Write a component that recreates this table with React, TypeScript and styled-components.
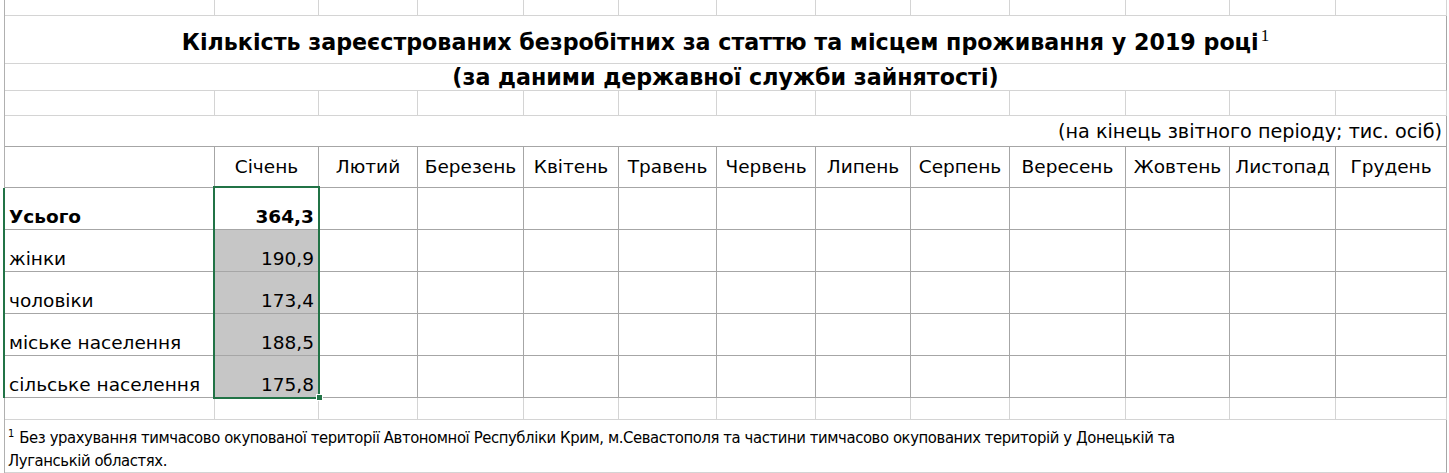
import React from "react";
import styled, { createGlobalStyle, css } from "styled-components";

const GlobalStyle = createGlobalStyle`
  html, body { margin: 0; padding: 0; background: #ffffff; }
  body { font-family: "DejaVu Sans", Verdana, sans-serif; color: #000; }
`;

const LIGHT = "#d4d4d4";
const DARK = "#a6a6a6";
const GREEN = "#217346";

const COLS = [210, 104, 99, 106, 95, 98, 99, 95, 99, 116, 104, 106, 111];

const MONTHS = [
  "Січень", "Лютий", "Березень", "Квітень", "Травень", "Червень",
  "Липень", "Серпень", "Вересень", "Жовтень", "Листопад", "Грудень",
];

const DATA: { label: string; value: string; bold?: boolean }[] = [
  { label: "Усього", value: "364,3", bold: true },
  { label: "жінки", value: "190,9" },
  { label: "чоловіки", value: "173,4" },
  { label: "міське населення", value: "188,5" },
  { label: "сільське населення", value: "175,8" },
];

const Sheet = styled.div`
  display: flex;
  flex-direction: column;
  width: 1449px;
  height: 473px;
  overflow: hidden;
`;

const Row = styled.div<{ $h: number }>`
  display: grid;
  grid-template-columns: 5px ${COLS.map((c) => `${c}px`).join(" ")} 3px;
  height: ${(p) => p.$h}px;
  flex: none;
`;

const Gutter = styled.div<{ $sel?: boolean }>`
  box-sizing: border-box;
  border-right: ${(p) => (p.$sel ? `2px solid ${GREEN}` : `1px solid #b0b0b0`)};
`;

const Cell = styled.div<{
  $dark?: boolean;
  $align?: "left" | "center" | "right";
  $center?: boolean;
  $bold?: boolean;
  $fill?: boolean;
  $active?: boolean;
}>`
  box-sizing: border-box;
  position: relative;
  border-right: 1px solid ${(p) => (p.$dark ? DARK : LIGHT)};
  border-bottom: 1px solid ${(p) => (p.$dark ? DARK : LIGHT)};
  display: flex;
  align-items: ${(p) => (p.$center ? "center" : "flex-end")};
  justify-content: ${(p) =>
    p.$align === "right" ? "flex-end" : p.$align === "center" ? "center" : "flex-start"};
  padding: 0 4px 1px 4px;
  font-size: 18.5px;
  line-height: 22px;
  font-weight: ${(p) => (p.$bold ? 700 : 400)};
  white-space: nowrap;
  ${(p) =>
    p.$fill &&
    css`
      background: #c6c6c6;
    `}
  ${(p) =>
    p.$active &&
    css`
      z-index: 1;
    `}
`;

const Merged = styled.div<{ $dark?: boolean }>`
  grid-column: 2 / span 13;
  box-sizing: border-box;
  border-right: 1px solid ${DARK};
  border-bottom: 1px solid ${(p) => (p.$dark ? DARK : LIGHT)};
  display: flex;
`;

const TitleLine = styled.div<{ $pb: number }>`
  width: 100%;
  align-self: flex-end;
  text-align: center;
  font-weight: 700;
  font-size: 22.2px;
  line-height: 24px;
  padding-bottom: ${(p) => p.$pb}px;
  white-space: nowrap;
`;

const TitleSup = styled.span`
  position: relative;
  top: -9px;
  font-family: "Liberation Serif", "Times New Roman", serif;
  font-weight: 400;
  font-size: 17px;
  line-height: 0;
  margin-left: 2px;
`;

const Units = styled.div`
  width: 100%;
  align-self: flex-end;
  text-align: right;
  font-size: 19.2px;
  line-height: 22px;
  padding: 0 4px 3px 0;
  white-space: nowrap;
`;

const Footnote = styled.div`
  align-self: flex-start;
  max-width: 1220px;
  padding: 6px 6px 0 3px;
  font-family: "DejaVu Sans Condensed", "Liberation Sans", Arial, sans-serif;
  font-stretch: condensed;
  font-size: 16.5px;
  letter-spacing: -0.4px;
  line-height: 23px;
`;

const FootSup = styled.span`
  position: relative;
  top: -6px;
  font-size: 11px;
  line-height: 0;
  margin-right: 5px;
  letter-spacing: 0;
`;

const SelectionFrame = styled.div`
  position: absolute;
  top: -2px;
  left: -2px;
  width: 107px;
  height: 213px;
  box-sizing: border-box;
  border: 2px solid ${GREEN};
  pointer-events: none;
`;

const FillHandle = styled.div`
  position: absolute;
  right: -4px;
  bottom: -3px;
  width: 5px;
  height: 5px;
  background: ${GREEN};
  box-shadow: 0 0 0 1px #ffffff;
`;

function EmptyRow({ h }: { h: number }) {
  return (
    <Row $h={h}>
      <Gutter />
      {COLS.map((_, i) => (
        <Cell key={i} />
      ))}
    </Row>
  );
}

export default function App() {
  return (
    <>
      <GlobalStyle />
      <Sheet>
        <EmptyRow h={16} />

        <Row $h={48}>
          <Gutter />
          <Merged>
            <TitleLine $pb={9}>
              Кількість зареєстрованих безробітних за статтю та місцем проживання у 2019 році
              <TitleSup>1</TitleSup>
            </TitleLine>
          </Merged>
        </Row>

        <Row $h={27}>
          <Gutter />
          <Merged>
            <TitleLine $pb={1}>(за даними державної служби зайнятості)</TitleLine>
          </Merged>
        </Row>

        <EmptyRow h={25} />

        <Row $h={31}>
          <Gutter />
          <Merged $dark>
            <Units>(на кінець звітного періоду; тис. осіб)</Units>
          </Merged>
        </Row>

        <Row $h={41}>
          <Gutter />
          <Cell $dark />
          {MONTHS.map((m) => (
            <Cell key={m} $dark $align="center" $center>
              {m}
            </Cell>
          ))}
        </Row>

        {DATA.map((d, r) => (
          <Row $h={42} key={d.label}>
            <Gutter $sel />
            <Cell $dark $bold={d.bold}>
              {d.label}
            </Cell>
            <Cell $dark $align="right" $bold={d.bold} $fill={r > 0} $active={r === 0}>
              {d.value}
              {r === 0 && (
                <SelectionFrame>
                  <FillHandle />
                </SelectionFrame>
              )}
            </Cell>
            {MONTHS.slice(1).map((m) => (
              <Cell key={m} $dark />
            ))}
          </Row>
        ))}

        <EmptyRow h={22} />

        <Row $h={53}>
          <Gutter />
          <Merged>
            <Footnote>
              <FootSup>1</FootSup>
              Без урахування тимчасово окупованої території Автономної Республіки Крим, м.Севастополя та частини тимчасово окупованих територій у Донецькій та Луганській областях.
            </Footnote>
          </Merged>
        </Row>
      </Sheet>
    </>
  );
}
